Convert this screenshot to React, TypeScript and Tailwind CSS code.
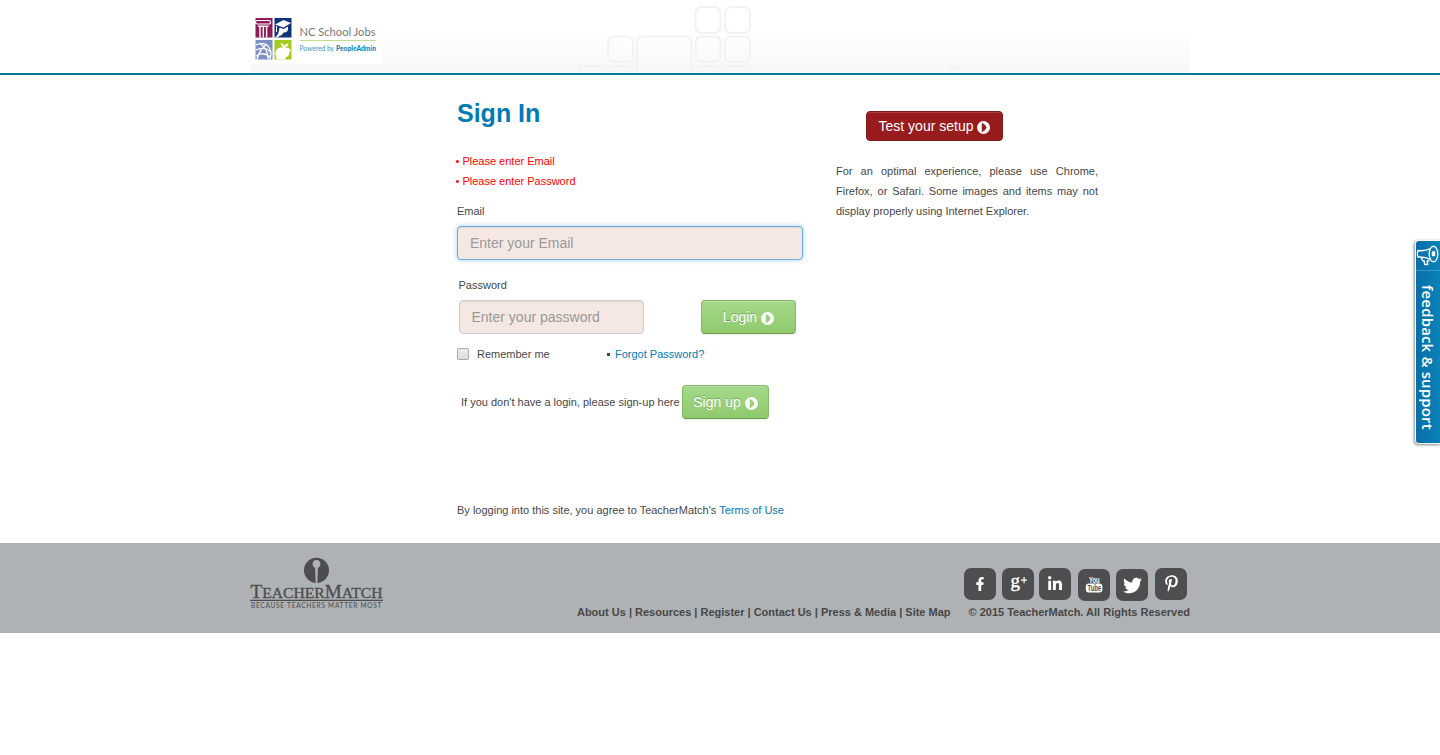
import type { ReactNode } from "react";
import { FaFacebookF, FaLinkedinIn, FaTwitter, FaPinterestP } from "react-icons/fa";

function ArrowBadge() {
  return (
    <svg viewBox="0 0 13 13" className="mt-[5px] ml-1 h-[13px] w-[13px] shrink-0" fill="#fff" fillRule="evenodd">
      <path d="M6.5 0a6.5 6.5 0 1 1 0 13a6.5 6.5 0 0 1 0-13ZM4.800 1.800V11.200Q9 9 9.600 6.500Q9 4 4.800 1.800Z" />
    </svg>
  );
}

function HeaderPattern() {
  return (
    <svg className="absolute top-0 left-0 h-[73px] w-[940px]" viewBox="250 0 940 73" fill="none" stroke="#f2f2f3" strokeWidth="2">
      <rect x="695.5" y="7" width="25" height="26" rx="6" />
      <rect x="725" y="7" width="25" height="26" rx="6" />
      <rect x="608" y="36.5" width="25" height="25.5" rx="6" />
      <rect x="695.5" y="36.5" width="25" height="25.5" rx="6" />
      <rect x="725" y="36.5" width="25" height="25.5" rx="6" />
      <path d="M637 72V42a5.5 5.5 0 0 1 5.5-5.5H686a5.5 5.5 0 0 1 5.500 5.500V72" />
      <path d="M579 71q0-5 6-5h12q6 0 6 4M608 71q0-5 6-5h13q6 0 6 5M695.500 71q0-5 6-5h13q6 0 6 5M725 71q0-5 6-5h13q6 0 6 5M949 70q3-3 9-3" />
    </svg>
  );
}

function SchoolJobsLogo() {
  return (
    <svg className="relative h-16 w-[133px] bg-white" viewBox="250 0 133 64">
      <rect x="255.500" y="18" width="17" height="19.500" fill="#8d1b57" />
      <path d="M255.500 22.500q0-2 2-2h11q2 0 2 1.800t-1.800 1.700h-11.400q-1.800 0-1.800-1.500" fill="none" stroke="#fff" strokeWidth="1.200" />
      <path d="M258 26.300h10.500M260 27v10.500M263.300 27v10.500M266.600 27v10.500" fill="none" stroke="#fff" strokeWidth="1.400" />
      <rect x="274.500" y="18" width="17" height="19.500" fill="#10337b" />
      <path d="M275 24.500l8.500-4.500 7.500 3-7.500 4.500ZM279.500 27.500l4 1.500 4.500-2.500v3.500q-1.500 3-4.500 2.500-1 2.500-4 3.500-1.500 1.500-4.500 1.500q4-3 4.500-10Z" fill="#fff" />
      <path d="M276.500 26v6" stroke="#fff" />
      <rect x="255.500" y="40" width="17" height="19.500" fill="#7c8fc6" />
      <path d="M255.500 45q10-4 14 3 3 6 0 11.500M255.500 50q10-4 15 2M256 56q7-5 14.500 1M259 43q9 5 9 16M267 44q-8 6-10 15.500" fill="none" stroke="#fff" strokeWidth="1.300" />
      <rect x="274.500" y="40" width="17" height="19.500" fill="#a5cb1f" />
      <path d="M276.500 59.500q-3-9 2-11.500 2.500-.8 4 0 0-3-2-4l1-1q2 1 2.500 3 2-3 4.500-2.500-.5 3-3.500 4.500 5-1 5.500 3-2 1-1.500 4-2 2-3.500 2.500v2Z" fill="#fff" />
      <text x="299.500" y="35.500" fontFamily="Lato, sans-serif" fontSize="11.700" fill="#77787b" textLength="76" lengthAdjust="spacingAndGlyphs">NC School Jobs</text>
      <path d="M300 40.500h76" stroke="#c5dc8a" />
      <text x="299.500" y="51" fontFamily="Lato, sans-serif" fontSize="6.800" fill="#3b97bf" textLength="34.500" lengthAdjust="spacingAndGlyphs">Powered by</text>
      <text x="336" y="51" fontFamily="Lato, sans-serif" fontWeight="900" fontSize="6.800" fill="#1682b4" textLength="40" lengthAdjust="spacingAndGlyphs">PeopleAdmin</text>
    </svg>
  );
}

function TeacherMatchLogo() {
  return (
    <svg className="h-[52px] w-[134px]" viewBox="250 557 134 52" fill="#4d4d4f">
      <circle cx="316.500" cy="570.300" r="12.500" />
      <path d="M316.500 560a4 4 0 0 1 1.400 7.700l-.5 15h-1.800l-.5-15a4 4 0 0 1 1.400-7.700Z" fill="#aeb2b5" />
      <text x="250.500" y="598" fontFamily="Liberation Serif, serif" fontSize="19" stroke="#4d4d4f" strokeWidth=".35" textLength="132" lengthAdjust="spacingAndGlyphs">
        T<tspan fontSize="15.500">EACHER</tspan>M<tspan fontSize="15.500">ATCH</tspan>
      </text>
      <path d="M250 599.800h133v1.200h-133Z" />
      <text x="251" y="607.800" fontFamily="Lato, sans-serif" fontSize="6.600" textLength="130.500">BECAUSE TEACHERS MATTER MOST</text>
    </svg>
  );
}

function SocialTile({ label, className, children }: { label: string; className: string; children: ReactNode }) {
  return (
    <a aria-label={label} className={"flex h-8 w-8 items-center justify-center rounded-[7px] bg-[#4d4e50] text-white " + className}>
      {children}
    </a>
  );
}

function FeedbackTab() {
  return (
    <aside className="absolute top-[241px] right-0 flex h-[202px] w-6 flex-col rounded-l-[3px] bg-linear-to-r from-[#0a6ea8] to-[#0882b8] shadow-[0_0_0_1px_#f5f5f5,-1px_1px_3px_1px_#888]">
      <div className="flex h-[30px] items-center justify-center border-b border-[#3c96c3] pr-px">
        <svg className="h-[22px] w-[23px]" viewBox="0 0 23 22" fill="none" stroke="#fff" strokeWidth="1.400" strokeLinejoin="round">
          <ellipse cx="17.500" cy="9" rx="4.300" ry="7.800" />
          <path d="M14.500 3.500Q9 6.500 2 5.500Q.8 8.500 2 12Q9 11.500 14.500 14.500M5 12.200L7 16h1.200l.5 3.500h3l-.5-3.500h1.500v-2.500" />
          <path d="M16.500 7h2v3.500h-2Z" fill="#fff" />
        </svg>
      </div>
      <div className="flex flex-1 items-center justify-center font-['Open_Sans',sans-serif] text-[15px] leading-[22px] font-semibold text-white [writing-mode:vertical-rl]">
        <span className="tracking-[0.15px] whitespace-nowrap">feedback &amp; support</span>
      </div>
    </aside>
  );
}

const greenButton =
  "flex h-[34px] items-start justify-center rounded-[4px] border border-[#87b966] border-b-[#6a9c4a] bg-linear-to-b from-[#a5d98b] to-[#8fca6c] pt-[6px] text-[14px] leading-5 text-white shadow-[inset_0_1px_0_#b2dfa0,0_1px_2px_#0001] [text-shadow:0_-1px_0_#00000040]";

export default function App() {
  return (
    <div className="relative h-[755px] w-full overflow-hidden bg-white font-['Liberation_Sans',Arial,sans-serif] text-[11px] leading-5 text-[#474747]">
      <header className="h-[75px] border-b-2 border-[#007aa5]">
        <div className="relative mx-auto h-[73px] w-[940px] bg-linear-to-b from-white from-40% to-[#f7f7f7]">
          <HeaderPattern />
          <SchoolJobsLogo />
        </div>
      </header>

      <main className="mx-auto flex h-[468px] w-[940px] pl-[207px]">
        <form className="w-[379px]">
          <h1 className="pt-[23px] text-[25px] leading-[30px] font-bold text-[#007ab4]">Sign In</h1>
          <div className="-ml-[1.500px] pt-[23px] text-[#ff0000]">
            <p>• Please enter Email</p>
            <p>• Please enter Password</p>
          </div>
          <label htmlFor="email" className="mt-[10px] block">Email</label>
          <input id="email" placeholder="Enter your Email" className="mt-[5px] block h-[34px] w-[346px] rounded-[4px] border border-[#66afe9] bg-[#f5e8e3] px-3 text-[14px] shadow-[inset_0_1px_1px_#00000013,0_0_5px_#66afe999] outline-none placeholder:text-[#999]" />
          <label htmlFor="password" className="mt-[15px] ml-[1.500px] block">Password</label>
          <div className="mt-[5px] ml-[2px] flex">
            <input id="password" type="password" placeholder="Enter your password" className="h-[34px] w-[185px] rounded-[4px] border border-[#ccc] bg-[#f5e8e3] px-[11.500px] text-[14px] shadow-[inset_0_1px_1px_#00000013] outline-none placeholder:text-[#999]" />
            <button type="button" className={greenButton + " ml-[57px] w-[95px]"}>Login<ArrowBadge /></button>
          </div>
          <div className="mt-[10px] flex items-center">
            <span role="checkbox" aria-checked="false" className="h-3 w-3 rounded-[2px] border border-[#a8a8a8] bg-linear-to-b from-[#eee] to-[#dcdcdc]" />
            <span className="ml-2 w-[130px]">Remember me</span>
            <span className="mr-[5px] h-[3px] w-[3px] bg-[#474747]" />
            <a className="text-[#007ab4]">Forgot Password?</a>
          </div>
          <div className="mt-[21px] ml-1 flex items-center">
            <span className="w-[221px] whitespace-nowrap">If you don't have a login, please sign-up here</span>
            <button type="button" className={greenButton + " w-[87px]"}>Sign up<ArrowBadge /></button>
          </div>
          <p className="mt-[81px]">By logging into this site, you agree to TeacherMatch's <a className="text-[#007ab4]">Terms of Use</a></p>
        </form>
        <section className="w-[262px] pt-9">
          <button type="button" className="ml-[30px] flex h-[30px] w-[137px] items-start justify-center rounded-[4px] border border-[#84191b] bg-[#981b1e] pt-[4px] text-[14px] leading-5 text-white shadow-[inset_0_1px_0_#a93b3e]">Test your setup<ArrowBadge /></button>
          <p className="mt-5 text-justify">For an optimal experience, please use Chrome, Firefox, or Safari. Some images and items may not display properly using Internet Explorer.</p>
        </section>
      </main>

      <footer className="h-[90px] bg-[#aeb2b5]">
        <div className="mx-auto flex w-[940px] justify-between pt-[14px]">
          <TeacherMatchLogo />
          <div className="flex flex-col items-end pt-[11px]">
            <div className="mr-[3px] flex items-start">
              <SocialTile label="Facebook" className=""><FaFacebookF size={14} /></SocialTile>
              <SocialTile label="Google Plus" className="ml-[6px]">
                <svg viewBox="0 0 24 26" className="h-[26px] w-6" fill="#fff"><text x="4.500" y="16" fontFamily="Liberation Serif, serif" fontSize="19" stroke="#fff" strokeWidth=".4">g</text><path d="M15 8.500h2.500V6h1.200v2.500H21v1.200h-2.300v2.500h-1.200V9.700H15Z" /></svg>
              </SocialTile>
              <SocialTile label="LinkedIn" className="ml-[5px]"><FaLinkedinIn size={16} /></SocialTile>
              <SocialTile label="YouTube" className="mt-px ml-[7px]">
                <svg viewBox="0 0 24 24" className="h-6 w-6" fill="#fff" fontFamily="Liberation Sans, sans-serif" fontWeight="700">
                  <text x="7" y="9.500" fontSize="9" textLength="10.500" lengthAdjust="spacingAndGlyphs">You</text>
                  <rect x="3.800" y="10.500" width="16.600" height="9" rx="3" />
                  <text x="5.500" y="18" fontSize="8.500" fill="#4d4e50" textLength="13.500" lengthAdjust="spacingAndGlyphs">Tube</text>
                </svg>
              </SocialTile>
              <SocialTile label="Twitter" className="mt-px ml-[6px]"><FaTwitter size={19} /></SocialTile>
              <SocialTile label="Pinterest" className="ml-[7px]"><FaPinterestP size={17} className="-mt-px" /></SocialTile>
            </div>
            <div className="mt-px flex font-bold whitespace-pre">
              <nav>About Us | Resources | Register | Contact Us | Press &amp; Media | Site Map</nav>
              <span className="ml-[18px]">© 2015 TeacherMatch. All Rights Reserved</span>
            </div>
          </div>
        </div>
      </footer>
      <FeedbackTab />
    </div>
  );
}
